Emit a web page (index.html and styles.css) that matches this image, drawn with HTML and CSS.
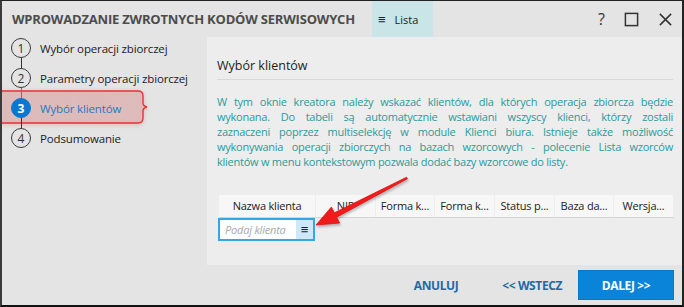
FILE: index.html
```html
<html><head>
<meta charset="UTF-8">
<title>Wprowadzanie zwrotnych kodów serwisowych</title>
<link rel="stylesheet" href="styles.css">
</head>
<body>
<div class="window">
    <header class="titlebar">
        <h1>WPROWADZANIE ZWROTNYCH KODÓW SERWISOWYCH</h1>
        <div class="tab"><span class="burger">≡</span>Lista</div>
        <div class="controls">
            <span class="help">?</span>
            <svg class="ctl" viewBox="0 0 16 16"><rect x="1.5" y="1.5" width="13" height="13" fill="none" stroke="#333" stroke-width="1.6"/></svg>
            <svg class="ctl" viewBox="0 0 16 16"><path d="M2 2 L14 14 M14 2 L2 14" stroke="#333" stroke-width="1.6"/></svg>
        </div>
    </header>

    <div class="main">
        <nav class="steps">
            <div class="step"><span class="num">1</span>Wybór operacji zbiorczej</div>
            <div class="step"><span class="num">2</span>Parametry operacji zbiorczej</div>
            <div class="step active"><span class="num">3</span>Wybór klientów</div>
            <div class="step last"><span class="num">4</span>Podsumowanie</div>
        </nav>

        <section class="panel">
            <h2>Wybór klientów</h2>
            <p class="info">
                <span class="ln">W tym oknie kreatora należy wskazać klientów, dla których operacja zbiorcza będzie</span>
                <span class="ln">wykonana. Do tabeli są automatycznie wstawiani wszyscy klienci, którzy zostali</span>
                <span class="ln">zaznaczeni poprzez multiselekcję w module Klienci biura. Istnieje także możliwość</span>
                <span class="ln">wykonywania operacji zbiorczych na bazach wzorcowych - polecenie Lista wzorców</span>
                <span class="ln">klientów w menu kontekstowym pozwala dodać bazy wzorcowe do listy.</span>
            </p>

            <div class="grid-head">
                <div class="col">Nazwa klienta</div>
                <div class="col">NIP</div>
                <div class="col">Forma k...</div>
                <div class="col">Forma k...</div>
                <div class="col">Status p...</div>
                <div class="col">Baza da...</div>
                <div class="col">Wersja...</div>
            </div>
            <div class="filter">
                <span class="placeholder">Podaj klienta</span>
                <span class="filter-btn">≡</span>
            </div>
        </section>
    </div>

    <footer class="actions">
        <button class="link">ANULUJ</button>
        <button class="link">&lt;&lt; WSTECZ</button>
        <button class="primary">DALEJ &gt;&gt;</button>
    </footer>

    <!-- adnotacje na zrzucie -->
    <svg class="mark" viewBox="0 0 152 38">
        <defs>
            <linearGradient id="pink" x1="0" x2="1" y1="0" y2="0">
                <stop offset="0" stop-color="#d9a9a9" stop-opacity="0.45"/>
                <stop offset="1" stop-color="#dcb0b0" stop-opacity="0.5"/>
            </linearGradient>
        </defs>
        <path d="M-2 3 H138 Q143 3 143 8 V15 Q143 18 147 19 Q143 20 143 23 V30 Q143 35 138 35 H-2"
              fill="url(#pink)" stroke="#e83232" stroke-width="1.4"/>
    </svg>
    <svg class="arrow" viewBox="0 0 684 307">
        <polygon points="316,225 331.4,207 334.3,212.8 406.6,177.2 407.4,178.8 336.6,217.2 339.6,223"
                 fill="#f01c1c" stroke="#e01010" stroke-width="0.8" stroke-linejoin="round"/>
    </svg>
</div>
</body></html>
```

FILE: styles.css
```css
* {
    margin: 0;
    padding: 0;
    box-sizing: border-box;
    font-family: 'Open Sans', sans-serif;
}

body {
    background: #e4e4e4;
}

.window {
    position: relative;
    width: 684px;
    height: 307px;
    background: #e4e4e4;
    border-top: 1px solid #222;
    border-left: 2px solid #3a3a3a;
    border-right: 2px solid #222;
    border-bottom: 2px solid #111;
    display: flex;
    flex-direction: column;
    overflow: hidden;
}

.titlebar {
    height: 36px;
    display: flex;
    align-items: stretch;
}

.titlebar h1 {
    width: 370px;
    padding-left: 10px;
    font-size: 13px;
    font-weight: 700;
    color: #4c4c4c;
    line-height: 36px;
    white-space: nowrap;
    overflow: hidden;
    letter-spacing: -0.2px;
}

.tab {
    width: 61px;
    background: #c9e5e7;
    font-size: 11px;
    color: #222;
    display: flex;
    align-items: center;
    padding-left: 6px;
}

.burger {
    font-size: 13px;
    margin-right: 9px;
}

.controls {
    margin-left: auto;
    display: flex;
    align-items: center;
    gap: 19px;
    padding-right: 9px;
}

.help {
    font-size: 16px;
    color: #333;
}

.ctl {
    width: 15px;
    height: 15px;
}

.main {
    height: 228px;
    display: flex;
}

.steps {
    width: 205px;
    padding: 1px 0 0 9px;
    position: relative;
    z-index: 1;
}

.step {
    position: relative;
    height: 20px;
    margin-bottom: 10px;
    display: flex;
    align-items: center;
    font-size: 11.5px;
    color: #222;
    letter-spacing: -0.15px;
}

.step::after {
    content: "";
    position: absolute;
    left: 9.5px;
    top: 20px;
    width: 1px;
    height: 10px;
    background: #333;
}

.step.last::after {
    display: none;
}

.num {
    width: 20px;
    height: 20px;
    border: 1.5px solid #3a3a3a;
    border-radius: 50%;
    margin-right: 9px;
    display: flex;
    align-items: center;
    justify-content: center;
    font-size: 12px;
    color: #333;
    letter-spacing: 0;
}

.step:nth-child(2)::after {
    background: #2a86d0;
}

.step.active {
    color: #2a78c2;
}

.step.active .num {
    background: #0b78d0;
    border-color: #0b78d0;
    color: white;
    font-weight: 700;
}

.panel {
    flex: 1;
    background: #ededed;
    padding: 21px 0 0 10px;
}

.panel h2 {
    font-size: 12.5px;
    font-weight: 400;
    line-height: 16px;
    color: #222;
}

.panel h2::after {
    content: "";
    display: block;
    margin-top: 5px;
    width: 456px;
    height: 1px;
    background: #d8d8d8;
}

.info {
    width: 456px;
    margin-top: 14px;
    font-size: 11px;
    line-height: 15px;
    color: #2b9a9b;
    letter-spacing: -0.25px;
}

.ln {
    display: block;
    white-space: nowrap;
    text-align: justify;
    text-align-last: justify;
}

.ln:last-child {
    text-align-last: left;
}

.grid-head {
    margin: 26px 0 0 2px;
    display: grid;
    grid-template-columns: 96px 59px 58px 59px 59px 58px 59px;
    gap: 1px;
    border-bottom: 1px solid #d4d4d4;
    width: 455px;
}

.col {
    background: #f7f7f7;
    height: 22px;
    font-size: 11px;
    color: #222;
    text-align: center;
    line-height: 22px;
    white-space: nowrap;
    overflow: hidden;
    letter-spacing: -0.2px;
}

.filter {
    margin-left: 1px;
    width: 97px;
    height: 23px;
    border: 2px solid #35a6e6;
    background: white;
    display: flex;
    align-items: stretch;
}

.placeholder {
    flex: 1;
    padding-left: 5px;
    font-size: 11px;
    font-style: italic;
    color: #a8a8a8;
    line-height: 19px;
    letter-spacing: -0.2px;
}

.filter-btn {
    width: 17px;
    background: #cfe7f6;
    font-size: 13px;
    color: #222;
    text-align: center;
    line-height: 19px;
}

.actions {
    flex: 1;
    display: flex;
    justify-content: flex-end;
    align-items: center;
    padding-right: 8px;
}

button {
    border: none;
    background: none;
    font-size: 12px;
    font-weight: 700;
    letter-spacing: -0.4px;
    height: 30px;
    cursor: pointer;
}

.link {
    color: #1f6aa6;
    padding: 0 16px;
    margin-left: 12px;
}

.primary {
    width: 96px;
    background: #0a84d8;
    color: white;
    border: 1px solid #0a78c6;
}

.mark {
    position: absolute;
    left: -2px;
    top: 87px;
    width: 152px;
    height: 38px;
    filter: drop-shadow(0 1px 2px rgba(200, 60, 60, 0.35));
}

.arrow {
    position: absolute;
    left: -2px;
    top: -1px;
    width: 684px;
    height: 307px;
    z-index: 2;
    pointer-events: none;
    filter: drop-shadow(1px 2px 1px rgba(0, 0, 0, 0.25));
}
```
